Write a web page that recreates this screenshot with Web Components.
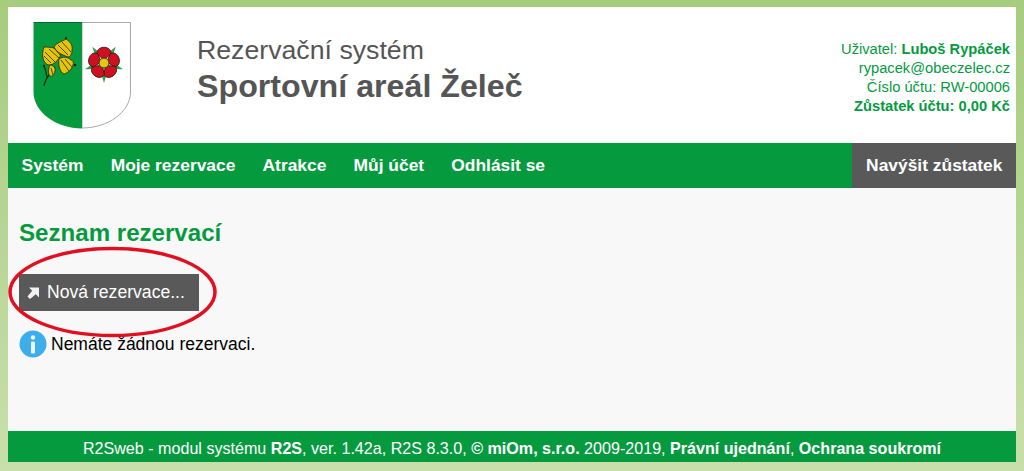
<!DOCTYPE html>
<html lang="cs">
<head>
<meta charset="utf-8">
<title>Rezervační systém</title>
<style>
html, body { margin: 0; height: 100%; }
body {
    height: 471px;
    overflow: hidden;
    box-sizing: border-box;
    padding: 7px 8px 9px 8px;
    background: linear-gradient(#a6cc7e, #c9dfab);
    font-family: "Liberation Sans", Arial, sans-serif;
}
</style>
</head>
<body>
<r2s-page>
    <r2s-header slot="header" title-small="Rezervační systém" title-big="Sportovní areál Želeč"></r2s-header>
    <r2s-nav slot="nav">
        <a>Systém</a><a>Moje rezervace</a><a>Atrakce</a><a>Můj účet</a><a>Odhlásit se</a>
        <a slot="right">Navýšit zůstatek</a>
    </r2s-nav>
    <r2s-content slot="content"></r2s-content>
    <r2s-footer slot="footer"></r2s-footer>
</r2s-page>

<script>
class R2sPage extends HTMLElement {
    connectedCallback() {
        const shadow = this.attachShadow({ mode: 'open' });
        shadow.innerHTML = `
            <style>
                :host { display: flex; flex-direction: column; height: 455px; }
                ::slotted([slot=content]) { flex: 1; }
            </style>
            <slot name="header"></slot>
            <slot name="nav"></slot>
            <slot name="content"></slot>
            <slot name="footer"></slot>
        `;
    }
}
customElements.define("r2s-page", R2sPage);

class R2sErb extends HTMLElement {
    connectedCallback() {
        const shadow = this.attachShadow({ mode: 'open' });
        // erb obce: zelene pole s lipou, bile s ruzi
        shadow.innerHTML = `
            <style>
                :host { display: block; width: 98px; height: 107px; }
                svg { display: block; }
            </style>
            <svg width="98" height="107" viewBox="0 0 98 107">
                <path d="M49 0.500H97.500V70C97.500 90 75 106 49 106Z" fill="#fff" stroke="#a8a8a8" stroke-width="1"/>
                <path d="M0.500 0.500H49V106.500C23 106.500 0.500 90 0.500 70Z" fill="#069a3f"/>
                <path d="M0.500 0.500H49" stroke="#056a2c" stroke-width="1"/>
                <path d="M11 64C12 56 17 52 22 45M14 55C13 51 13 48 11 44" fill="none" stroke="#14301c" stroke-width="1.300"/>
                <g stroke="#2a2408" stroke-width="0.800" fill="#e6c40a">
                    <path d="M10 36C9 32 10 28 11 25C18 25 25 26 28 30C28 36 22 42 17 43C13 43 11 40 10 36Z"/>
                    <path d="M21 25C23 21 30 19 33 17C37 20 40 22 39 29C39 32 37 35 35 35C30 33 24 31 21 25Z"/>
                    <path d="M26 37C30 34 35 35 38 38C40 38 41 41 40 43C39 47 35 51 31 52C27 50 25 44 26 37Z"/>
                    <path d="M17 43C20 43 23 46 22 49C21 53 19 55 17 54C15 52 15 47 17 43Z"/>
                    <path d="M12 30L22 40M11 34L18 41M16 27L26 36M21 26L27 33M25 23L35 33M29 20L38 30M28 38L36 49M32 37L39 45M18 46L20 53" fill="none"/>
                </g>
                <circle cx="11" cy="44" r="1.200" fill="#1a1a1a"/><circle cx="42" cy="43" r="1.300" fill="#1a1a1a"/><circle cx="33" cy="16" r="1" fill="#1a1a1a"/>
                <g transform="translate(71 41)">
                    <g fill="#2aa24e">
                        <path id="s" d="M-3 -10L0 -20 3 -10Z" transform="rotate(36)"/>
                        <use href="#s" transform="rotate(72)"/>
                        <use href="#s" transform="rotate(144)"/>
                        <use href="#s" transform="rotate(216)"/>
                        <use href="#s" transform="rotate(288)"/>
                    </g>
                    <g fill="#cf1020" stroke="#301010" stroke-width="0.800">
                        <path id="p" d="M-7 -9C-8 -18 8 -18 7 -9L0 -3Z"/>
                        <use href="#p" transform="rotate(72)"/>
                        <use href="#p" transform="rotate(144)"/>
                        <use href="#p" transform="rotate(216)"/>
                        <use href="#p" transform="rotate(288)"/>
                    </g>
                    <circle r="5" fill="#e3c70d" stroke="#333" stroke-width="1"/>
                </g>
            </svg>
        `;
    }
}
customElements.define("r2s-erb", R2sErb);

class R2sHeader extends HTMLElement {
    connectedCallback() {
        const shadow = this.attachShadow({ mode: 'open' });
        shadow.innerHTML = `
            <style>
                :host { display: flex; height: 136px; background: #fff; box-sizing: border-box; padding: 15px 6px 0 25px; }
                .nazev { margin-left: 66px; padding-top: 12px; color: #555; }
                .maly { font-size: 26.700px; line-height: 32px; }
                .velky { font-size: 32.200px; line-height: 40px; font-weight: bold; }
                .ucet { margin-left: auto; padding-top: 18px; text-align: right; color: #069a3f; font-size: 14.700px; line-height: 19px; }
            </style>
            <r2s-erb></r2s-erb>
            <div class="nazev">
                <div class="maly">${this.getAttribute('title-small')}</div>
                <div class="velky">${this.getAttribute('title-big')}</div>
            </div>
            <div class="ucet">
                <div>Uživatel: <b>Luboš Rypáček</b></div>
                <div>rypacek@obeczelec.cz</div>
                <div>Číslo účtu: RW-00006</div>
                <div><b>Zůstatek účtu: 0,00 Kč</b></div>
            </div>
        `;
    }
}
customElements.define("r2s-header", R2sHeader);

class R2sNav extends HTMLElement {
    connectedCallback() {
        const shadow = this.attachShadow({ mode: 'open' });
        shadow.innerHTML = `
            <style>
                :host { display: flex; height: 45px; background: #069a3f; color: #fff; font-size: 17.400px; font-weight: bold; line-height: 45px; }
                ::slotted(a) { padding: 0 13.600px; }
                .levy { display: flex; flex: 1; }
                .pravy { display: flex; background: #595959; padding-left: 1px; }
            </style>
            <div class="levy"><slot></slot></div>
            <div class="pravy"><slot name="right"></slot></div>
        `;
    }
}
customElements.define("r2s-nav", R2sNav);

class R2sButton extends HTMLElement {
    connectedCallback() {
        const shadow = this.attachShadow({ mode: 'open' });
        shadow.innerHTML = `
            <style>
                :host { display: inline-flex; align-items: center; width: 180px; height: 37px; box-sizing: border-box; padding-left: 8px; background: #595959; color: #fff; font-size: 17.600px; }
                svg { margin-right: 8px; }
            </style>
            <svg width="12" height="12" viewBox="0 0 12 12"><path d="M2 0.500H12V10.500L8.800 7.300 3 12 0.500 9.500 5.200 3.700Z" fill="#f2f2f2"/></svg>
            <slot></slot>
        `;
    }
}
customElements.define("r2s-button", R2sButton);

class R2sContent extends HTMLElement {
    connectedCallback() {
        const shadow = this.attachShadow({ mode: 'open' });
        shadow.innerHTML = `
            <style>
                :host { display: block; position: relative; background: #f8f8f8; box-sizing: border-box; padding: 29px 11px 0; }
                h1 { margin: 0 0 26px; color: #069a3f; font-size: 24.100px; line-height: 31px; font-weight: bold; }
                .info { display: flex; align-items: center; gap: 4px; margin-top: 19px; color: #000; font-size: 17.500px; line-height: 28px; }
                .info svg { flex: none; }
                .kruh { position: absolute; left: 0; top: 58px; pointer-events: none; }
            </style>
            <h1>Seznam rezervací</h1>
            <r2s-button>Nová rezervace...</r2s-button>
            <div class="info">
                <svg width="28" height="28" viewBox="0 0 28 28">
                    <circle cx="14" cy="14" r="13.500" fill="#3eaeea"/>
                    <circle cx="14" cy="7.500" r="2.200" fill="#e8f6fd"/>
                    <rect x="12" y="11.500" width="4" height="12" rx="1" fill="#e8f6fd"/>
                </svg>
                <span>Nemáte žádnou rezervaci.</span>
            </div>
            <svg class="kruh" width="212" height="92" viewBox="0 0 212 92">
                <ellipse cx="104.500" cy="46" rx="102.500" ry="43.500" fill="none" stroke="#e01020" stroke-width="3.500"/>
            </svg>
        `;
    }
}
customElements.define("r2s-content", R2sContent);

class R2sFooter extends HTMLElement {
    connectedCallback() {
        const shadow = this.attachShadow({ mode: 'open' });
        shadow.innerHTML = `
            <style>
                :host { display: block; height: 31px; background: #069a3f; color: #fff; font-size: 16.100px; line-height: 34px; text-align: center; }
            </style>
            R2Sweb - modul systému <b>R2S</b>, ver. 1.42a, R2S 8.3.0, <b>© miOm, s.r.o.</b> 2009-2019, <b>Právní ujednání</b>, <b>Ochrana soukromí</b>
        `;
    }
}
customElements.define("r2s-footer", R2sFooter);
</script>
</body>
</html>
